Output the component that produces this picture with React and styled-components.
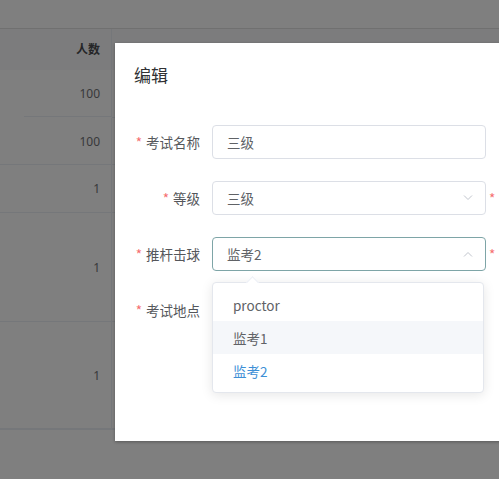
import React from "react";
import styled, { createGlobalStyle } from "styled-components";

const Global = createGlobalStyle`
  html, body {
    margin: 0;
    padding: 0;
    overflow: hidden;
    background: #ffffff;
    font-family: "Noto Sans", "Noto Sans CJK SC", sans-serif;
  }
`;

const Page = styled.div`
  position: relative;
  width: 100vw;
  height: 100vh;
  overflow: hidden;
  background: #ffffff;
`;

const TopBar = styled.div`
  height: 29px;
  border-bottom: 1px solid #e0e0e0;
  box-sizing: border-box;
`;

const Table = styled.div`
  display: grid;
  grid-template-columns: 10px 102px 1fr;
  width: 700px;
  border-bottom: 1px solid #ebeef5;
`;

const Cell = styled.div`
  height: ${({ h }) => h}px;
  box-sizing: border-box;
  overflow: hidden;
  border-bottom: 1px solid ${({ noLine }) => (noLine ? "transparent" : "#ebeef5")};
  border-right: 1px solid #ebeef5;
  background: ${({ head }) => (head ? "#f9f9fa" : "#ffffff")};
  display: flex;
  align-items: center;
  justify-content: flex-end;
  padding-right: ${({ flush }) => (flush ? 0 : 11)}px;
  font-size: 12px;
  color: ${({ head }) => (head ? "#4a4c50" : "#707276")};
  font-weight: ${({ head }) => (head ? 700 : 400)};
`;

const InsetLine = styled.div`
  height: 100%;
  width: 100%;
  box-sizing: border-box;
  margin-left: 14px;
  border-bottom: 1px solid #ebeef5;
  display: flex;
  align-items: center;
  justify-content: flex-end;
  padding-right: 11px;
`;

const Mask = styled.div`
  position: absolute;
  inset: 0;
  background: rgba(0, 0, 0, 0.5);
`;

const Dialog = styled.div`
  position: absolute;
  left: 115px;
  top: 43px;
  width: 420px;
  height: 398px;
  background: #ffffff;
  box-shadow: 0 1px 3px rgba(0, 0, 0, 0.3);
  font-family: "Noto Sans CJK SC", "Noto Sans", sans-serif;
`;

const DialogTitle = styled.div`
  padding: 20px 20px 0 19px;
  font-size: 17px;
  line-height: 24px;
  color: #303133;
`;

const Form = styled.div`
  padding: 38px 0 0 20px;
  display: flex;
  flex-direction: column;
  gap: 22px;
`;

const Row = styled.div`
  display: flex;
  align-items: center;
  height: 34px;
`;

const Label = styled.div`
  flex-shrink: 0;
  width: 77px;
  box-sizing: border-box;
  padding-right: 12px;
  text-align: right;
  font-size: 13.5px;
  color: #55575b;
  white-space: nowrap;
`;

const Star = styled.span`
  color: #f56c6c;
  margin-right: 4px;
`;

const Field = styled.div`
  flex-shrink: 0;
  width: 274px;
  height: 34px;
  box-sizing: border-box;
  border: 1px solid ${({ focused }) => (focused ? "#7ea5a7" : "#dcdfe6")};
  border-radius: 4px;
  display: flex;
  align-items: center;
  padding: 0 12px 0 14px;
  font-size: 13.5px;
  color: #606266;
  background: #ffffff;
`;

const Chevron = styled.svg`
  margin-left: auto;
  width: 10px;
  height: 6px;
`;

const SideLabel = styled.div`
  flex-shrink: 0;
  margin-left: 3px;
  font-size: 13.5px;
  color: #55575b;
  white-space: nowrap;
`;

const Dropdown = styled.div`
  position: absolute;
  left: 97px;
  top: 239px;
  width: 272px;
  box-sizing: border-box;
  padding: 5px 0;
  background: #ffffff;
  border: 1px solid #e4e7ed;
  border-radius: 4px;
  box-shadow: 0 2px 12px rgba(0, 0, 0, 0.1);
`;

const Notch = styled.div`
  position: absolute;
  left: 35px;
  top: -5px;
  width: 8px;
  height: 8px;
  background: #ffffff;
  border-left: 1px solid #ebeef5;
  border-top: 1px solid #ebeef5;
  transform: rotate(45deg);
`;

const Option = styled.div`
  height: 33px;
  display: flex;
  align-items: center;
  padding-left: 20px;
  font-size: 13.5px;
  color: ${({ selected }) => (selected ? "#3d8fd6" : "#606266")};
  background: ${({ hover }) => (hover ? "#f5f7fa" : "transparent")};
`;

const rows = [
  { h: 41, text: "人数", head: true, noLine: true },
  { h: 48, text: "100", inset: true },
  { h: 47, text: "100" },
  { h: 48, text: "1" },
  { h: 109, text: "1" },
  { h: 107, text: "1" },
];

const ArrowIcon = ({ up }) => (
  <Chevron viewBox="0 0 10 6">
    <polyline
      points={up ? "1,5.5 5,1.5 9,5.5" : "1,0.5 5,4.5 9,0.5"}
      fill="none"
      stroke="#c0c4cc"
      strokeWidth="1"
    />
  </Chevron>
);

export default function App() {
  return (
    <Page>
      <Global />
      <TopBar />
      <Table>
        {rows.map((r, i) => (
          <React.Fragment key={i}>
            <Cell h={r.h} head={r.head} noLine={r.noLine || r.inset} />
            {r.inset ? (
              <Cell h={r.h} noLine flush>
                <InsetLine>{r.text}</InsetLine>
              </Cell>
            ) : (
              <Cell h={r.h} head={r.head} noLine={r.noLine}>{r.text}</Cell>
            )}
            <Cell h={r.h} head={r.head} noLine={r.noLine} />
          </React.Fragment>
        ))}
      </Table>
      <Mask />
      <Dialog>
        <DialogTitle>编辑</DialogTitle>
        <Form>
          <Row>
            <Label><Star>*</Star>考试名称</Label>
            <Field>三级</Field>
          </Row>
          <Row>
            <Label><Star>*</Star>等级</Label>
            <Field>
              三级
              <ArrowIcon />
            </Field>
            <SideLabel><Star>*</Star>考试时间</SideLabel>
          </Row>
          <Row>
            <Label><Star>*</Star>推杆击球</Label>
            <Field focused>
              监考2
              <ArrowIcon up />
            </Field>
            <SideLabel><Star>*</Star>考试时间</SideLabel>
          </Row>
          <Row>
            <Label><Star>*</Star>考试地点</Label>
          </Row>
        </Form>
        <Dropdown>
          <Notch />
          <Option>proctor</Option>
          <Option hover>监考1</Option>
          <Option selected>监考2</Option>
        </Dropdown>
      </Dialog>
    </Page>
  );
}
